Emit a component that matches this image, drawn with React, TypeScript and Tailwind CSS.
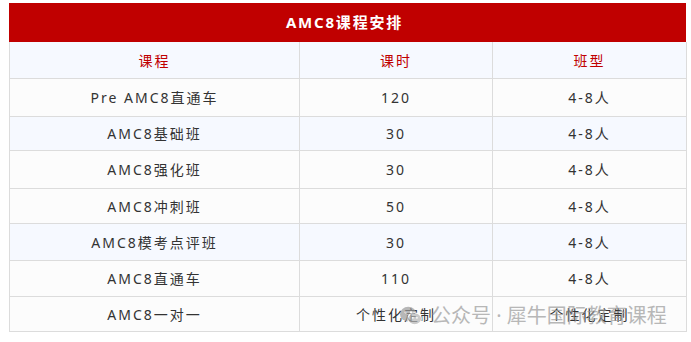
import React from "react";

const rows: { c: string; h: string; t: string; bg: string; hh: string }[] = [
  { c: "Pre AMC8直通车", h: "120", t: "4-8人", bg: "bg-[#fcfcfc]", hh: "h-[38px]" },
  { c: "AMC8基础班", h: "30", t: "4-8人", bg: "bg-[#f6f9ff]", hh: "h-[34px]" },
  { c: "AMC8强化班", h: "30", t: "4-8人", bg: "bg-[#fcfcfc]", hh: "h-[38px]" },
  { c: "AMC8冲刺班", h: "50", t: "4-8人", bg: "bg-[#fcfcfc]", hh: "h-[35px]" },
  { c: "AMC8模考点评班", h: "30", t: "4-8人", bg: "bg-[#f6f9ff]", hh: "h-[37px]" },
  { c: "AMC8直通车", h: "110", t: "4-8人", bg: "bg-[#fcfcfc]", hh: "h-[36px]" },
  { c: "AMC8一对一", h: "个性化定制", t: "个性化定制", bg: "bg-[#fcfcfc]", hh: "h-[35px]" },
];

const font = { fontFamily: '"Noto Sans", "Noto Sans CJK SC", sans-serif' };

export default function App() {
  return (
    <div className="relative w-[691px] h-[342px] bg-white pt-[3px] pl-[9px]" style={font}>
      <div className="w-[677px]">
        <div className="h-[39px] bg-[#c00000] flex items-center justify-center text-white font-bold text-[15px] tracking-[1.8px] pr-[6px]">
          AMC8课程安排
        </div>
        <div className="border-l border-[#dcdcdc]">
          <div className="grid grid-cols-[290px_193px_194px] h-[37px] bg-[#f6f9ff] text-[#c00000] text-[14px] tracking-[2px]">
            <div className="flex items-center justify-center border-r border-b border-[#dcdcdc]">课程</div>
            <div className="flex items-center justify-center border-r border-b border-[#dcdcdc]">课时</div>
            <div className="flex items-center justify-center border-r border-b border-[#dcdcdc]">班型</div>
          </div>
          {rows.map((r, i) => (
            <div
              key={i}
              className={`grid grid-cols-[290px_193px_194px] ${r.hh} ${r.bg} text-[#333333] text-[14px] tracking-[2px]`}
            >
              <div className="flex items-center justify-center border-r border-b border-[#dcdcdc]">{r.c}</div>
              <div className="flex items-center justify-center border-r border-b border-[#dcdcdc]">{r.h}</div>
              <div className="flex items-center justify-center border-r border-b border-[#dcdcdc]">{r.t}</div>
            </div>
          ))}
        </div>
      </div>
      <div className="absolute left-[399px] top-[301px] flex items-center gap-[8px] text-[20px] text-[#9a9a9a] opacity-70 pointer-events-none">
        <svg width="24" height="22" viewBox="0 0 26 24">
          <ellipse cx="10" cy="10" rx="9" ry="8" fill="#9a9a9a" />
          <ellipse cx="17" cy="15" rx="7.5" ry="6.5" fill="#b5b5b5" stroke="#fff" strokeWidth="1.2" />
          <circle cx="7" cy="8" r="1.2" fill="#fff" />
          <circle cx="13" cy="8" r="1.2" fill="#fff" />
          <circle cx="15" cy="14" r="1" fill="#fff" />
          <circle cx="19.5" cy="14" r="1" fill="#fff" />
        </svg>
        <span>公众号 · 犀牛国际教育课程</span>
      </div>
    </div>
  );
}
